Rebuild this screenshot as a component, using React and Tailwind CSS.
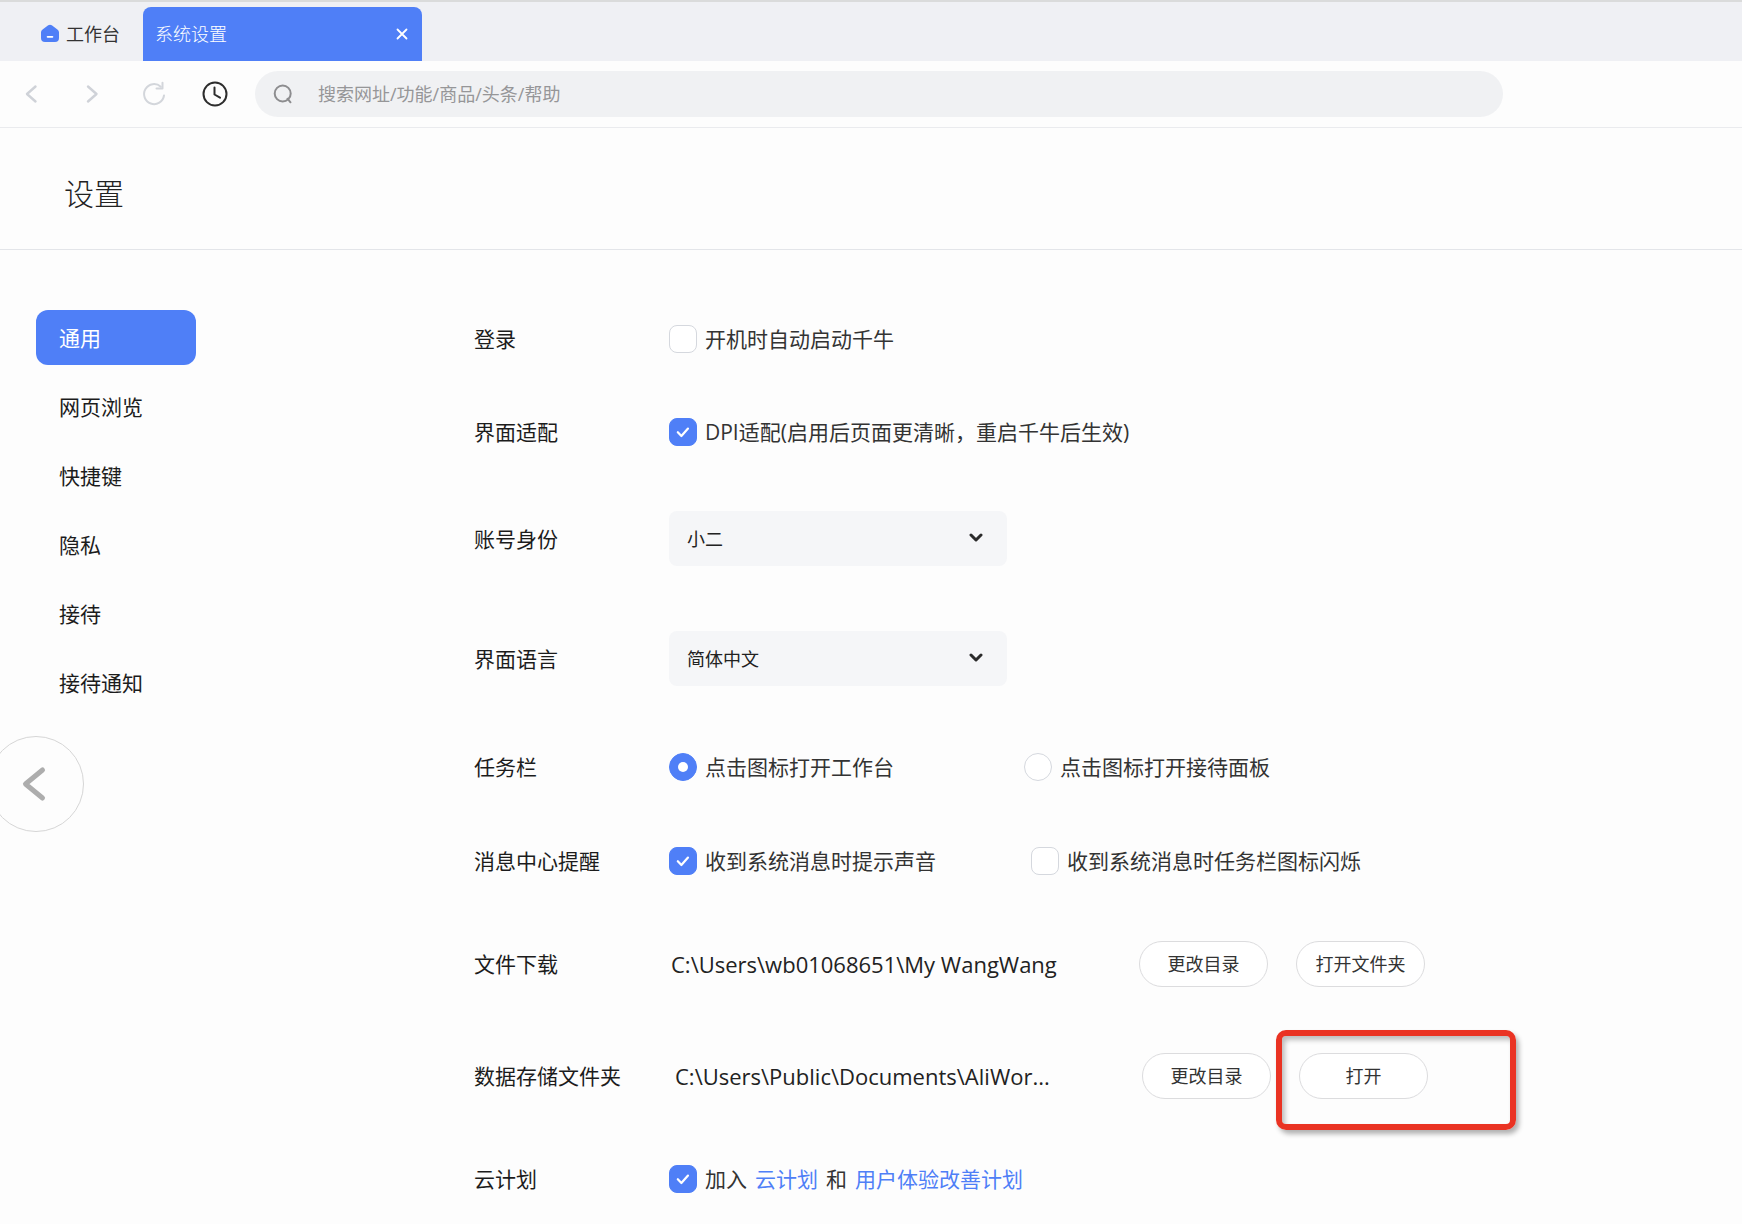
import React, { useState } from "react";

function Check({ id, label, on = false, children }) {
  const [checked, setChecked] = useState(on);
  return (
    <div className="flex items-center gap-2">
      <span className="relative flex size-7 shrink-0">
        <input
          id={id}
          type="checkbox"
          checked={checked}
          onChange={(e) => setChecked(e.target.checked)}
          className="size-7 appearance-none rounded-lg border border-[#d5d8de] bg-white checked:border-[#4f7ff7] checked:bg-[#4f7ff7]"
        />
        {checked && (
          <svg viewBox="0 0 28 28" className="pointer-events-none absolute inset-0 size-7" fill="none" stroke="#fff" strokeWidth="2.2" strokeLinecap="round" strokeLinejoin="round">
            <path d="M8.8 14.2l3.6 3.8 6.6-7.4" />
          </svg>
        )}
      </span>
      <label htmlFor={id}>{label}</label>
      {children}
    </div>
  );
}

function Radio({ id, label, value, current, onPick }) {
  const checked = value === current;
  return (
    <div className="flex items-center gap-2">
      <span className="relative flex size-7 shrink-0 items-center justify-center">
        <input
          id={id}
          type="radio"
          name="taskbar"
          checked={checked}
          onChange={() => onPick(value)}
          className="size-7 appearance-none rounded-full border border-[#d5d8de] bg-white checked:border-[#4f7ff7] checked:bg-[#4f7ff7]"
        />
        {checked && <span className="pointer-events-none absolute size-2.5 rounded-full bg-white" />}
      </span>
      <label htmlFor={id}>{label}</label>
    </div>
  );
}

function Select({ id, options }) {
  return (
    <div className="relative w-[338px]">
      <select id={id} className="h-[55px] w-full appearance-none rounded-lg bg-[#f5f6f8] px-[18px] text-lg text-[#222]">
        {options.map((o) => (
          <option key={o}>{o}</option>
        ))}
      </select>
      <svg viewBox="0 0 14 10" className="pointer-events-none absolute top-[22px] right-6 h-2.5 w-3.5" fill="none" stroke="#2b2b2b" strokeWidth="3" strokeLinecap="round" strokeLinejoin="round">
        <path d="M2 2l5 5 5-5" />
      </svg>
    </div>
  );
}

function Pill({ children }) {
  return (
    <button type="button" className="h-[46px] w-[129px] shrink-0 rounded-full border border-[#dcdcde] bg-white text-lg text-[#333]">
      {children}
    </button>
  );
}

function Row({ label, htmlFor, children }) {
  const Tag = htmlFor ? "label" : "div";
  return (
    <div className="flex items-center">
      <Tag htmlFor={htmlFor} className="w-[195px] shrink-0 text-[#1c1c1c]">
        {label}
      </Tag>
      {children}
    </div>
  );
}

const NAV = ["通用", "网页浏览", "快捷键", "隐私", "接待", "接待通知"];

export default function App() {
  const [taskbar, setTaskbar] = useState("work");
  return (
    <div className="min-h-screen overflow-hidden bg-[#fdfdfd] font-['Open_Sans','Noto_Sans_CJK_SC',sans-serif] text-[21px] leading-7 text-[#333]">
      <div className="flex h-[61px] items-end border-t-2 border-[#dadbdb] bg-[#eff0f4] text-lg" role="tablist">
        <button type="button" role="tab" aria-selected="false" className="flex h-[54px] w-[143px] items-center gap-1.5 pl-10 text-[#333]">
          <svg viewBox="0 0 20 20" className="size-5">
            <path d="M8.2 1.3a3 3 0 0 1 3.6 0l5.6 4.1A3.6 3.600 0 0 1 19 8.300V14a4 4 0 0 1-4 4H5a4 4 0 0 1-4-4V8.300a3.600 3.600 0 0 1 1.600-2.900z" fill="#4f7ff7" />
            <path d="M7.600 12.800h4.800" stroke="#fff" strokeWidth="1.800" strokeLinecap="round" />
          </svg>
          工作台
        </button>
        <div className="flex h-[54px] w-[279px] items-center justify-between rounded-t-lg bg-[#4f7ff7] px-3 text-white">
          <button type="button" role="tab" aria-selected="true" className="font-light">
            系统设置
          </button>
          <button type="button" aria-label="关闭" className="flex size-4 items-center justify-center">
            <svg viewBox="0 0 12 12" className="size-3" fill="none" stroke="#fff" strokeWidth="1.8" strokeLinecap="round">
              <path d="M1.5 1.5l9 9M10.500 1.500l-9 9" />
            </svg>
          </button>
        </div>
      </div>

      <div className="flex h-[67px] items-center border-b border-[#eaebee] bg-[#fdfdfd] pl-[18px]">
        <div className="flex gap-[33px]">
          <button type="button" aria-label="后退">
            <svg viewBox="0 0 28 28" className="size-7" fill="none" stroke="#cfd2d8" strokeWidth="2.4" strokeLinecap="round" strokeLinejoin="round">
              <path d="M17.5 6.5L9 14l8.5 7.5" />
            </svg>
          </button>
          <button type="button" aria-label="前进">
            <svg viewBox="0 0 28 28" className="size-7" fill="none" stroke="#cfd2d8" strokeWidth="2.4" strokeLinecap="round" strokeLinejoin="round">
              <path d="M9 6.5l8.5 7.5L9 21.5" />
            </svg>
          </button>
          <button type="button" aria-label="刷新">
            <svg viewBox="0 0 28 28" className="size-7" fill="none" stroke="#d3d6db" strokeWidth="2" strokeLinecap="round" strokeLinejoin="round">
              <path d="M24 15.5a10 10 0 1 1-3.2-8.8" />
              <path d="M22.5 2.8v5.700h-6" />
            </svg>
          </button>
          <button type="button" aria-label="历史">
            <svg viewBox="0 0 28 28" className="size-7" fill="none" stroke="#2d2d2d" strokeWidth="2" strokeLinecap="round" strokeLinejoin="round">
              <circle cx="14" cy="14" r="11.5" />
              <path d="M13.5 7.5v7l5.5 3.2" />
            </svg>
          </button>
        </div>
        <div className="mr-[239px] ml-[26px] flex h-[46px] flex-1 items-center gap-6 rounded-full bg-[#f0f1f3] pr-6 pl-[17px]">
          <svg viewBox="0 0 22 22" className="size-[22px] shrink-0" fill="none" stroke="#8d8d8f" strokeWidth="2" strokeLinecap="round">
            <circle cx="10.7" cy="10.5" r="8" />
            <path d="M15.5 15.7l3 3.6" />
          </svg>
          <input type="text" aria-label="搜索" placeholder="搜索网址/功能/商品/头条/帮助" className="w-full bg-transparent text-lg outline-none placeholder:text-[#969698]" />
        </div>
      </div>

      <header className="flex h-[122px] items-center border-b border-[#e3e5e9] px-16 pt-2.5">
        <h1 className="text-[30px] leading-10 font-light text-[#222]">设置</h1>
      </header>

      <div className="flex">
        <aside className="w-[474px] shrink-0 pt-[60px]">
          <nav className="flex flex-col gap-3.5 pl-9">
            {NAV.map((n, i) => (
              <a
                key={n}
                href="#"
                aria-current={i === 0 ? "page" : undefined}
                className={
                  i === 0
                    ? "flex h-[55px] w-40 items-center rounded-xl bg-[#4f7ff7] pl-[23px] text-white"
                    : "flex h-[55px] w-40 items-center pl-[23px] text-[#1c1c1c]"
                }
              >
                {n}
              </a>
            ))}
          </nav>
          <button type="button" aria-label="上一张" className="mt-[26px] -ml-3 flex size-24 items-center justify-center rounded-full border border-[#d6d6d6]">
            <svg viewBox="0 0 40 40" className="size-10" fill="none" stroke="#adadad" strokeWidth="5" strokeLinecap="round" strokeLinejoin="round">
              <path d="M26.500 6L9.500 20l17 14" />
            </svg>
          </button>
        </aside>

        <main className="flex flex-1 flex-col gap-[67px] pt-[75px]">
          <section className="flex flex-col gap-[65px]">
            <Row label="登录">
              <Check id="boot" label="开机时自动启动千牛" />
            </Row>
            <Row label="界面适配">
              <Check id="dpi" label="DPI适配(启用后页面更清晰，重启千牛后生效)" on />
            </Row>
            <Row label="账号身份" htmlFor="role">
              <Select id="role" options={["小二"]} />
            </Row>
            <Row label="界面语言" htmlFor="lang">
              <Select id="lang" options={["简体中文"]} />
            </Row>
          </section>
          <section className="flex flex-col gap-[66px]">
            <Row label="任务栏">
              <div className="w-[355px]">
                <Radio id="tb1" label="点击图标打开工作台" value="work" current={taskbar} onPick={setTaskbar} />
              </div>
              <Radio id="tb2" label="点击图标打开接待面板" value="chat" current={taskbar} onPick={setTaskbar} />
            </Row>
            <Row label="消息中心提醒">
              <div className="w-[362px]">
                <Check id="sound" label="收到系统消息时提示声音" on />
              </div>
              <Check id="flash" label="收到系统消息时任务栏图标闪烁" />
            </Row>
            <Row label="文件下载">
              <div className="w-[470px] pl-0.5 text-[22px] text-[#222]">C:\Users\wb01068651\My WangWang</div>
              <div className="flex gap-7">
                <Pill>更改目录</Pill>
                <Pill>打开文件夹</Pill>
              </div>
            </Row>
            <Row label="数据存储文件夹">
              <div className="w-[473px] pl-1.5 text-[22px] text-[#222]">C:\Users\Public\Documents\AliWor...</div>
              <div className="flex gap-7">
                <Pill>更改目录</Pill>
                <div className="relative">
                  <Pill>打开</Pill>
                  <div className="pointer-events-none absolute -top-[23px] -left-[23px] h-[100px] w-60 rounded-[10px] border-6 border-[#ea3323] shadow-[3px_4px_5px_rgba(0,0,0,0.3),inset_3px_4px_5px_rgba(0,0,0,0.25)]" />
                </div>
              </div>
            </Row>
            <Row label="云计划">
              <Check id="cloud" label="加入" on>
                <a href="#" className="text-[#4f7ff7]">云计划</a>
                <span>和</span>
                <a href="#" className="text-[#4f7ff7]">用户体验改善计划</a>
              </Check>
            </Row>
          </section>
        </main>
      </div>
    </div>
  );
}
